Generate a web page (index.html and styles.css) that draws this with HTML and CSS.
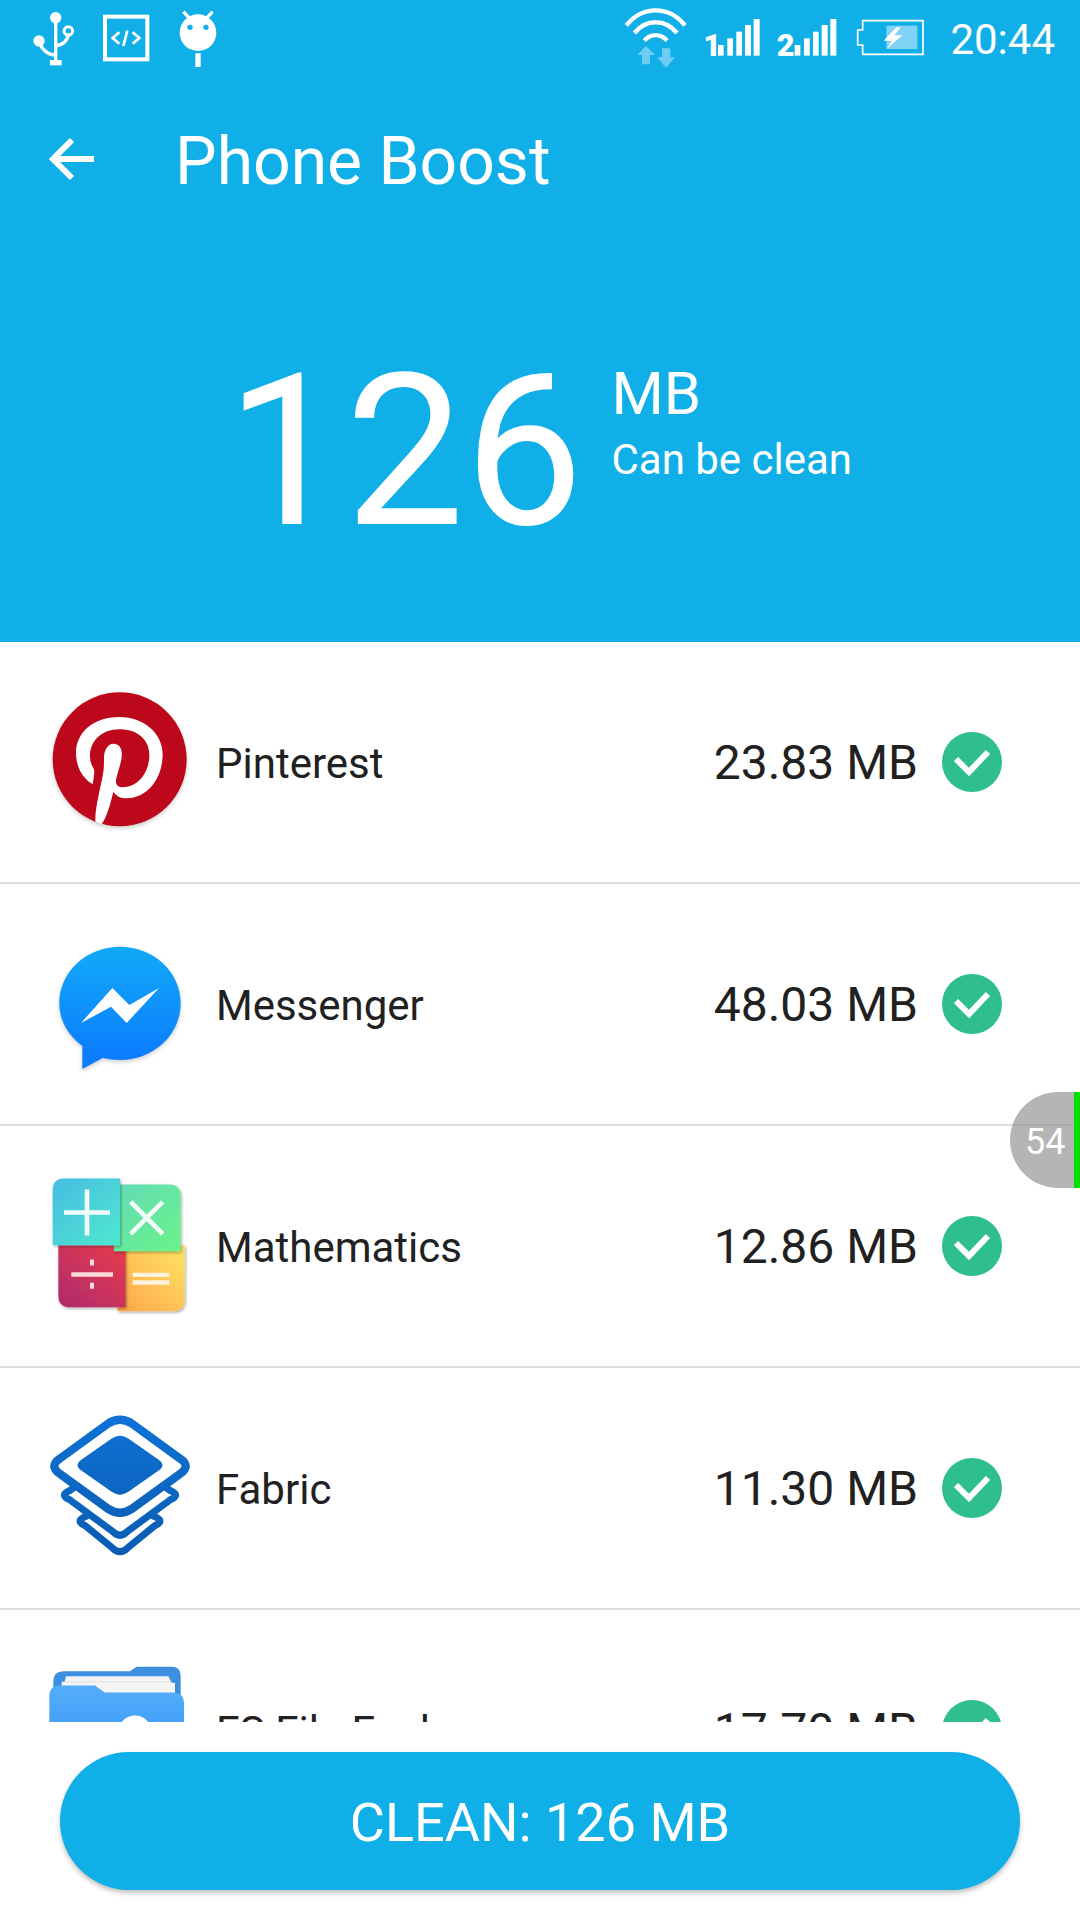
FILE: index.html
```html
<!DOCTYPE html>
<html lang="en">
<head>
<meta charset="utf-8">
<title>Phone Boost</title>
<link rel="stylesheet" href="styles.css">
</head>
<body>
<div class="app">
  <header class="top">
    <div class="status">
      <svg class="st-left" viewBox="0 0 900 300" aria-hidden="true">
        <g fill="none" stroke="#fff" stroke-width="10">
          <path d="M167 55V185"/>
          <path d="M117 123C125 150 145 165 167 165"/>
          <path d="M205 100C205 120 190 135 167 137"/>
          <circle cx="205" cy="93" r="13" stroke-width="9"/>
        </g>
        <g fill="#fff">
          <circle cx="167" cy="53" r="17"/>
          <circle cx="117" cy="123" r="17"/>
          <rect x="150" y="180" width="35" height="16"/>
        </g>
        <rect x="315" y="50" width="127" height="128" fill="none" stroke="#fff" stroke-width="12"/>
        <path d="M358 97L338 114L358 131M398 97L418 114L398 131M382 92L370 138" fill="none" stroke="#fff" stroke-width="8"/>
        <path d="M550 35L568 54M638 35L620 54" stroke="#fff" stroke-width="10"/>
        <circle cx="594" cy="98" r="55" fill="#fff"/>
        <circle cx="570" cy="82" r="8" fill="#10afe8"/>
        <circle cx="618" cy="82" r="8" fill="#10afe8"/>
        <rect x="586" y="160" width="16" height="41" fill="#fff"/>
      </svg>
      <div class="st-right">
        <svg class="st-icons" viewBox="0 0 1020 300" aria-hidden="true">
          <g fill="none" stroke="#fff" stroke-width="13">
            <path d="M82 76C130 16 210 16 258 76"/>
            <path d="M106 99C142 56 198 56 234 99"/>
            <path d="M136 122C155 100 185 100 204 122"/>
          </g>
          <path d="M115 165L141 138L168 165H153V193H129V165Z" fill="#6fcdf3"/>
          <path d="M175 172H189V145H214V172H228L201 204Z" fill="#6fcdf3"/>
          <g fill="#fff">
            <text class="sim" x="313" y="167">1</text>
            <rect x="357" y="135" width="17" height="32"/>
            <rect x="385" y="115" width="17" height="52"/>
            <rect x="412" y="95" width="17" height="72"/>
            <rect x="438" y="75" width="18" height="92"/>
            <rect x="464" y="57" width="18" height="110"/>
            <text class="sim" x="533" y="167">2</text>
            <rect x="587" y="135" width="17" height="32"/>
            <rect x="615" y="115" width="17" height="52"/>
            <rect x="642" y="95" width="17" height="72"/>
            <rect x="668" y="75" width="18" height="92"/>
            <rect x="694" y="57" width="18" height="110"/>
          </g>
          <path d="M791 62H972V163H791V135H776V90H791Z" fill="none" stroke="#fff" stroke-width="5"/>
          <rect x="862" y="77" width="93" height="70" fill="#7fd3f5"/>
          <path d="M892 82L854 122H878L864 146L910 106H886L906 82Z" fill="#fff"/>
        </svg>
        <span class="clock">20:44</span>
      </div>
    </div>
    <div class="toolbar">
      <svg class="back" viewBox="0 0 46 46" aria-hidden="true">
        <path d="M23 4L4 23L23 42M4 23H45" fill="none" stroke="#fff" stroke-width="6"/>
      </svg>
      <h1 class="title">Phone Boost</h1>
    </div>
    <div class="hero">
      <span class="amount">126</span>
      <div class="hero-side">
        <span class="unit">MB</span>
        <span class="caption">Can be clean</span>
      </div>
    </div>
  </header>

  <main class="list">
    <div class="row">
      <svg class="app-icon soft" viewBox="0 3 540 540" aria-hidden="true">
        <circle cx="269" cy="265" r="201" fill="#bd081c"/>
        <path fill="#fff" d="M188 340C155 320 138 285 138 245C138 185 190 138 268 138C345 138 398 190 398 250C398 325 350 382 290 382C272 382 258 375 250 362C242 395 232 435 215 460L196 452C195 420 205 375 215 330C222 300 222 285 222 262C222 235 235 218 250 218C268 218 278 232 275 258C272 285 258 315 258 332C258 345 270 350 285 348C325 345 358 305 358 252C358 205 322 175 268 175C215 175 180 210 180 255C180 275 187 285 192 295C194 305 190 330 188 340Z"/>
      </svg>
      <span class="name">Pinterest</span>
      <span class="size">23.83 MB</span>
      <svg class="check" viewBox="0 0 60 60" aria-hidden="true"><circle cx="30" cy="30" r="30"/><path d="M14 27L27 40L46 20"/></svg>
    </div>
    <div class="row">
      <svg class="app-icon soft" viewBox="0 -18 540 540" aria-hidden="true">
        <defs><linearGradient id="msg" x1="0" y1="0" x2="0" y2="1"><stop offset="0" stop-color="#12aaf8"/><stop offset="1" stop-color="#0a78fe"/></linearGradient></defs>
        <path fill="url(#msg)" d="M270 80C370 80 452 155 452 250C452 345 370 420 270 420C252 420 234 418 218 414L157 447V378C115 347 88 302 88 250C88 155 170 80 270 80Z"/>
        <path fill="#fff" d="M153 309L247 204L298 255L387 204L290 309L243 260Z"/>
      </svg>
      <span class="name">Messenger</span>
      <span class="size">48.03 MB</span>
      <svg class="check" viewBox="0 0 60 60" aria-hidden="true"><circle cx="30" cy="30" r="30"/><path d="M14 27L27 40L46 20"/></svg>
    </div>
    <div class="row">
      <svg class="app-icon" viewBox="0 -10.5 540 540" aria-hidden="true">
        <defs>
          <linearGradient id="mb" x1="0" y1="0" x2="1" y2="1"><stop offset="0" stop-color="#45bce2"/><stop offset="1" stop-color="#50e8cf"/></linearGradient>
          <linearGradient id="mg" x1="0" y1="0" x2="1" y2="1"><stop offset="0" stop-color="#64dab8"/><stop offset="1" stop-color="#68f488"/></linearGradient>
          <linearGradient id="mr" x1="0" y1="1" x2="1" y2="0"><stop offset="0" stop-color="#ac2a6c"/><stop offset="1" stop-color="#ea3c4c"/></linearGradient>
          <linearGradient id="mo" x1="0" y1="1" x2="1" y2="0"><stop offset="0" stop-color="#ffa44c"/><stop offset="1" stop-color="#fde562"/></linearGradient>
          <filter id="ms" x="-10%" y="-10%" width="125%" height="125%"><feDropShadow dx="3" dy="4" stdDeviation="4" flood-color="#000" flood-opacity=".35"/></filter>
        </defs>
        <path fill="url(#mo)" filter="url(#ms)" d="M263 257H464V420Q464 455 429 455H263Z"/>
        <path fill="url(#mr)" filter="url(#ms)" d="M85 257H287V443H120Q85 443 85 408Z"/>
        <path fill="url(#mg)" filter="url(#ms)" d="M252 75H417Q452 75 452 110V275H252Z"/>
        <path fill="url(#mb)" filter="url(#ms)" d="M103 57H270V257H68V92Q68 57 103 57Z"/>
        <path d="M102 159H240M171 90V228M302 127L398 223M398 127L302 223" stroke="#f2fbf8" stroke-width="14" fill="none"/>
        <path d="M124 345H249" stroke="#fbdada" stroke-width="13"/>
        <path d="M180 300h12v18h-12zM180 370h12v18h-12z" fill="#fbdada"/>
        <path d="M308 346H418M308 369H418" stroke="#fff3dc" stroke-width="13"/>
      </svg>
      <span class="name">Mathematics</span>
      <span class="size">12.86 MB</span>
      <svg class="check" viewBox="0 0 60 60" aria-hidden="true"><circle cx="30" cy="30" r="30"/><path d="M14 27L27 40L46 20"/></svg>
    </div>
    <div class="row">
      <svg class="app-icon" viewBox="0 -4.5 540 540" aria-hidden="true">
        <defs><linearGradient id="fa" gradientUnits="userSpaceOnUse" x1="0" y1="48" x2="0" y2="467"><stop offset="0" stop-color="#0f72d6"/><stop offset="1" stop-color="#0a5cb0"/></linearGradient></defs>
        <g fill="#fff" stroke="url(#fa)" stroke-width="21">
          <path d="M165 352L250 290Q270 278 290 290L375 352Q405 365 375 378L292 446Q270 467 248 446L165 378Q135 365 165 352Z"/>
          <path d="M118 274L250 180Q270 168 290 180L422 274Q452 287 422 300L292 396Q270 418 248 396L118 300Q88 287 118 274Z"/>
        </g>
        <path fill="#fff" stroke="url(#fa)" stroke-width="25" d="M90 177L236 71Q270 50 304 71L450 177Q484 200 450 223L304 329Q270 350 236 329L90 223Q56 200 90 177Z"/>
        <path fill="url(#fa)" d="M245 117Q270 100 295 117L385 180Q410 197 385 214L295 277Q270 294 245 277L155 214Q130 197 155 180Z"/>
      </svg>
      <span class="name">Fabric</span>
      <span class="size">11.30 MB</span>
      <svg class="check" viewBox="0 0 60 60" aria-hidden="true"><circle cx="30" cy="30" r="30"/><path d="M14 27L27 40L46 20"/></svg>
    </div>
    <div class="row">
      <svg class="app-icon" viewBox="-30 -28.5 540 540" aria-hidden="true">
        <defs><linearGradient id="fo" x1="0" y1="0" x2="0" y2="1"><stop offset="0" stop-color="#55aefb"/><stop offset="1" stop-color="#3898f6"/></linearGradient></defs>
        <path fill="#3d8fe2" d="M70 65H270L290 52H395Q422 52 422 80V200H40V95Q40 65 70 65Z"/>
        <path fill="#f4f4f4" d="M78 80H385L395 100H405V130H65V97H74Z"/>
        <path d="M70 97H392" stroke="#d8d8d8" stroke-width="2"/>
        <path fill="url(#fo)" d="M60 108H165L195 130H400Q432 130 432 160V300H28V140Q28 108 60 108Z"/>
        <circle cx="285" cy="248" r="50" fill="#fff"/>
      </svg>
      <span class="name">ES File Explorer</span>
      <span class="size">17.70 MB</span>
      <svg class="check" viewBox="0 0 60 60" aria-hidden="true"><circle cx="30" cy="30" r="30"/><path d="M14 27L27 40L46 20"/></svg>
    </div>
  </main>

  <footer class="bottom">
    <button class="clean" type="button">CLEAN: 126 MB</button>
  </footer>

  <div class="bubble"><span>54</span></div>
</div>
</body>
</html>
```

FILE: styles.css
```css
* { box-sizing: border-box; }
html, body { margin: 0; padding: 0; }
body { font-family: Roboto, "Noto Sans", sans-serif; background: #fff; color: #212121; }
.app { position: relative; width: 1080px; height: 1920px; display: flex; flex-direction: column; overflow: hidden; }

.top { height: 642px; background: #10afe8; color: #fff; display: flex; flex-direction: column; flex: none; }
.status { height: 100px; display: flex; justify-content: space-between; align-items: flex-start; padding-right: 25px; }
.st-left { width: 300px; height: 100px; display: block; }
.st-right { display: flex; align-items: flex-start; }
.st-icons { width: 340px; height: 100px; display: block; margin-right: 11px; }
.sim { font-family: Roboto, sans-serif; font-weight: 900; font-size: 92px; }
.clock { font-size: 42px; font-weight: 400; line-height: 50px; margin-top: 15px; }

.toolbar { height: 120px; display: flex; align-items: center; padding-left: 49px; }
.back { width: 46px; height: 46px; display: block; margin-top: -2px; }
.title { margin: 4px 0 0 80px; font-size: 66px; font-weight: 400; line-height: 76px; }

.hero { flex: 1; display: flex; align-items: flex-start; padding: 142px 0 0 226px; }
.amount { font-size: 212px; font-weight: 400; line-height: 180px; }
.hero-side { display: flex; flex-direction: column; margin: -9px 0 0 28px; }
.unit { font-size: 60px; line-height: 82px; }
.caption { font-size: 42px; line-height: 50px; }

.list { flex: 1; min-height: 0; overflow: hidden; }
.row { height: 242px; border-bottom: 2px solid #ddd; display: flex; align-items: center; padding-left: 30px; }
.app-icon { width: 180px; height: 180px; display: block; flex: none; }
.soft { filter: drop-shadow(0 2px 2px rgba(0,0,0,.2)); }
.name { flex: 1; margin: 4px 0 0 6px; font-size: 42px; line-height: 48px; color: #212121; }
.size { margin-top: 2px; font-size: 48px; line-height: 54px; color: #212121; }
.check { width: 60px; height: 60px; margin: 0 78px 0 24px; display: block; flex: none; }
.check circle { fill: #2fbf8c; }
.check path { fill: none; stroke: #fff; stroke-width: 6; }

.bottom { height: 198px; flex: none; padding: 30px 60px 30px 60px; }
.clean { width: 100%; height: 138px; border: 0; border-radius: 69px; padding: 2px 0 0; background: #10afe8; color: #fff; font-family: Roboto, sans-serif; font-size: 54px; box-shadow: 0 3px 5px rgba(0,0,0,.25); }

.bubble { position: absolute; top: 1092px; left: 1010px; width: 70px; height: 96px; border-radius: 48px 0 0 48px; background: rgba(150,150,150,.7); border-right: 6px solid #00dd00; color: #fff; display: flex; align-items: center; font-size: 36px; padding: 4px 0 0 15px; }
```
